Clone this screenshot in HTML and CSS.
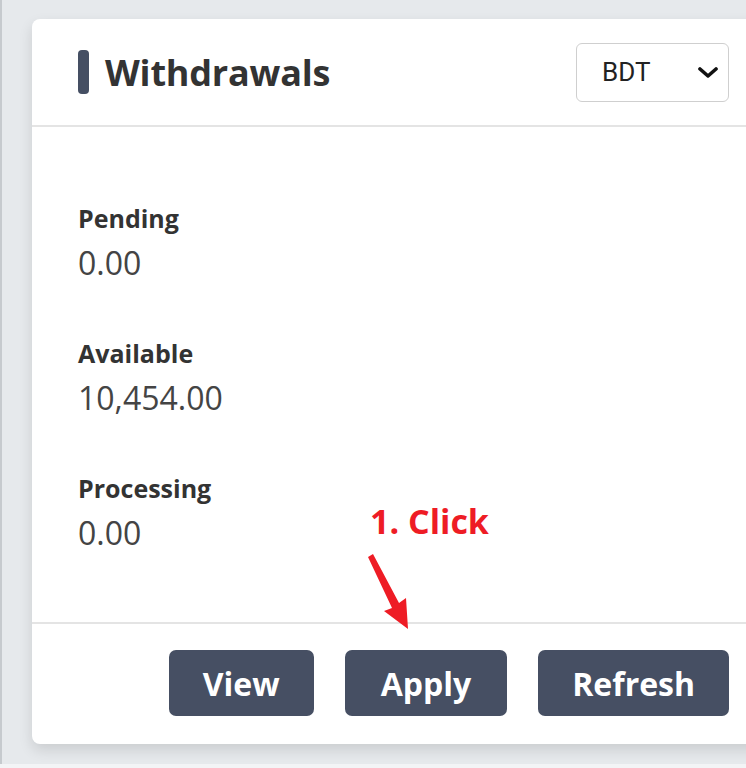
FILE: index.html
```html
<!DOCTYPE html>
<html lang="en">
<head>
  <meta charset="UTF-8">
  <meta name="viewport" content="width=device-width, initial-scale=1.0">
  <title>Withdrawals</title>
  <link rel="stylesheet" href="styles.css">
</head>
<body>
  <div class="page">
    <div class="card">
      <div class="card-header">
        <h2 class="title">Withdrawals</h2>
        <div class="select-wrap">
          <select class="currency">
            <option>BDT</option>
            <option>USD</option>
          </select>
          <svg class="chevron" viewBox="0 0 20 12" aria-hidden="true">
            <path d="M2 2l8 7 8-7" fill="none" stroke="#111" stroke-width="3.6" stroke-linecap="round" stroke-linejoin="round"/>
          </svg>
        </div>
      </div>

      <div class="card-body">
        <div class="stat">
          <div class="stat-label">Pending</div>
          <div class="stat-value">0.00</div>
        </div>
        <div class="stat">
          <div class="stat-label">Available</div>
          <div class="stat-value">10,454.00</div>
        </div>
        <div class="stat">
          <div class="stat-label">Processing</div>
          <div class="stat-value">0.00</div>
        </div>
      </div>

      <div class="card-footer">
        <button class="button">View</button>
        <button class="button btn-apply">Apply</button>
        <button class="button">Refresh</button>
      </div>

      <!-- annotation -->
      <div class="note">1. Click</div>
      <svg class="note-arrow" viewBox="0 0 50 80" aria-hidden="true">
        <polygon points="0,3 5,0 31,49 38,44 40,75 16,57 24,54" fill="#ee1c25"/>
      </svg>
    </div>
  </div>
</body>
</html>
```

FILE: styles.css
```css
* {
  margin: 0;
  padding: 0;
  box-sizing: border-box;
}

html, body {
  width: 746px;
  height: 768px;
  overflow: hidden;
  background-color: #f3f4f6;
  font-family: 'Open Sans', 'Noto Sans', sans-serif;
}

.page {
  height: 764px;
  background-color: #e6e9ec;
  border-left: 2px solid #c6cace;
  padding: 19px 0 0 30px;
}

.card {
  position: relative;
  width: 743px;
  height: 725px;
  background-color: #fff;
  border-radius: 8px;
  box-shadow: 0 6px 14px rgba(0, 0, 0, 0.12);
  display: flex;
  flex-direction: column;
}

.card-header {
  height: 108px;
  padding: 0 46px;
  border-bottom: 2px solid #e4e4e4;
  display: flex;
  align-items: center;
  justify-content: space-between;
}

.title {
  display: flex;
  align-items: center;
  gap: 16px;
  font-size: 36px;
  font-weight: 700;
  color: #333;
  letter-spacing: -0.2px;
}

.title::before {
  content: "";
  width: 11px;
  height: 44px;
  border-radius: 4px;
  background-color: #454f63;
}

.select-wrap {
  position: relative;
}

.currency {
  appearance: none;
  -webkit-appearance: none;
  width: 153px;
  height: 59px;
  padding-left: 25px;
  border: 1px solid #cfcfcf;
  border-radius: 6px;
  background-color: #fff;
  font-family: 'Roboto', 'Open Sans', sans-serif;
  font-size: 26px;
  color: #222;
  outline: none;
}

.chevron {
  position: absolute;
  right: 11px;
  top: 24px;
  width: 20px;
  height: 12px;
  pointer-events: none;
}

.card-body {
  flex: 1;
  padding: 76px 46px 0;
  display: flex;
  flex-direction: column;
  gap: 53px;
}

.stat-label {
  font-size: 25px;
  font-weight: 700;
  line-height: 30px;
  color: #333;
}

.stat-value {
  margin-top: 8px;
  font-size: 32px;
  line-height: 44px;
  color: #444;
}

.card-footer {
  height: 122px;
  padding: 26px 46px 0;
  border-top: 2px solid #e4e4e4;
  display: flex;
  justify-content: flex-end;
  align-items: flex-start;
  gap: 31px;
}

.button {
  height: 66px;
  padding: 0 34px;
  background-color: #464f63;
  color: #fff;
  border: none;
  border-radius: 7px;
  font-family: 'Open Sans', 'Noto Sans', sans-serif;
  font-size: 32px;
  font-weight: 700;
  cursor: pointer;
}

.btn-apply {
  padding: 0 36px;
}

.button:hover {
  background-color: #3a4254;
}

.note {
  position: absolute;
  left: 338px;
  top: 479px;
  font-size: 34px;
  font-weight: 700;
  color: #ee1c25;
}

.note-arrow {
  position: absolute;
  left: 336px;
  top: 535px;
  width: 50px;
  height: 80px;
}
```
